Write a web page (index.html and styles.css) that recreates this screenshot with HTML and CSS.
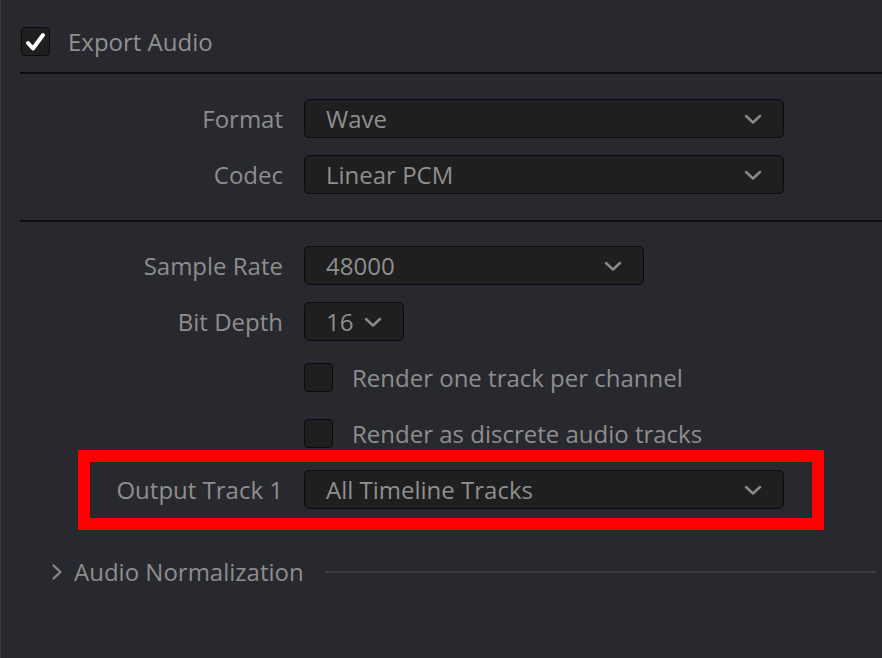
FILE: index.html
```html
<!DOCTYPE html>
<html>
<head>
<meta charset="utf-8">
<link rel="stylesheet" href="styles.css">
</head>
<body>
<div class="panel">
  <div class="header">
    <span class="check checked">
      <svg width="21" height="20" viewBox="0 0 21 20"><path d="M3 11 L8 16.5 L18 3" fill="none" stroke="#fff" stroke-width="4" stroke-linecap="round" stroke-linejoin="round"/></svg>
    </span>
    <span class="header-label">Export Audio</span>
  </div>
  <div class="sep"></div>
  <div class="group group-a">
    <div class="row">
      <span class="label">Format</span>
      <div class="select wide"><span>Wave</span><svg class="chev" width="18" height="10" viewBox="0 0 18 10"><path d="M2 2 L9 8.5 L16 2" fill="none" stroke="#8a8a8a" stroke-width="2.4" stroke-linecap="round" stroke-linejoin="round"/></svg></div>
    </div>
    <div class="row">
      <span class="label">Codec</span>
      <div class="select wide"><span>Linear PCM</span><svg class="chev" width="18" height="10" viewBox="0 0 18 10"><path d="M2 2 L9 8.5 L16 2" fill="none" stroke="#8a8a8a" stroke-width="2.4" stroke-linecap="round" stroke-linejoin="round"/></svg></div>
    </div>
  </div>
  <div class="sep"></div>
  <div class="group group-b">
    <div class="row">
      <span class="label">Sample Rate</span>
      <div class="select medium"><span>48000</span><svg class="chev" width="18" height="10" viewBox="0 0 18 10"><path d="M2 2 L9 8.5 L16 2" fill="none" stroke="#8a8a8a" stroke-width="2.4" stroke-linecap="round" stroke-linejoin="round"/></svg></div>
    </div>
    <div class="row">
      <span class="label">Bit Depth</span>
      <div class="select compact"><span>16</span><svg class="chev" width="18" height="10" viewBox="0 0 18 10"><path d="M2 2 L9 8.5 L16 2" fill="none" stroke="#8a8a8a" stroke-width="2.4" stroke-linecap="round" stroke-linejoin="round"/></svg></div>
    </div>
    <div class="row">
      <span class="label"></span>
      <div class="option"><span class="check"></span><span>Render one track per channel</span></div>
    </div>
    <div class="row">
      <span class="label"></span>
      <div class="option"><span class="check"></span><span>Render as discrete audio tracks</span></div>
    </div>
    <div class="row highlighted">
      <span class="label">Output Track 1</span>
      <div class="select wide"><span>All Timeline Tracks</span><svg class="chev" width="18" height="10" viewBox="0 0 18 10"><path d="M2 2 L9 8.5 L16 2" fill="none" stroke="#8a8a8a" stroke-width="2.4" stroke-linecap="round" stroke-linejoin="round"/></svg></div>
      <span class="highlight"></span>
    </div>
  </div>
  <div class="collapse">
    <svg class="arrow" width="12" height="18" viewBox="0 0 12 18"><path d="M2.5 2.5 L9.5 9 L2.5 15.5" fill="none" stroke="#8a8a8a" stroke-width="2.2" stroke-linecap="round" stroke-linejoin="round"/></svg>
    <span class="collapse-label">Audio Normalization</span>
    <span class="collapse-line"></span>
  </div>
</div>
</body>
</html>
```

FILE: styles.css
```css
html, body {
  margin: 0;
  padding: 0;
}
body {
  background: #28292e;
  width: 882px;
  height: 658px;
  overflow: hidden;
  font-family: "Open Sans", "Noto Sans", sans-serif;
  font-size: 24px;
  color: #8e8e8e;
  border-left: 1px solid #36363c;
  box-sizing: border-box;
}
.panel {
  padding-left: 19px;
  display: flex;
  flex-direction: column;
}
.header {
  margin-top: 22px;
  height: 39px;
  display: flex;
  align-items: center;
  gap: 18px;
}
.check {
  width: 29px;
  height: 29px;
  box-sizing: border-box;
  background: #1e1e1f;
  border: 1.5px solid #0c0c0c;
  border-radius: 4px;
  display: flex;
  align-items: center;
  justify-content: center;
  flex: none;
}
.header .check {
  margin-left: 1px;
}
.header-label {
  color: #909090;
}
.sep {
  height: 2px;
  background: #0e0e10;
  margin-top: 11px;
}
.group {
  display: flex;
  flex-direction: column;
  gap: 17px;
}
.group-a {
  padding-top: 25px;
  padding-bottom: 26px;
}
.group-a + .sep {
  margin-top: 0;
}
.group-b {
  padding-top: 24px;
}
.row {
  height: 39px;
  display: flex;
  align-items: center;
  gap: 21px;
  position: relative;
}
.label {
  width: 263px;
  text-align: right;
  flex: none;
}
.select {
  height: 39px;
  box-sizing: border-box;
  background: #1f1f20;
  border: 1.5px solid #0b0b0b;
  border-radius: 5px;
  display: flex;
  align-items: center;
  justify-content: space-between;
  padding: 0 21px 0 21px;
  color: #8f8f8f;
}
.select.wide { width: 480px; }
.select.medium { width: 340px; }
.select.compact { width: 100px; justify-content: flex-start; gap: 11px; }
.chev { display: block; flex: none; }
.option {
  display: flex;
  align-items: center;
  gap: 19px;
}
.highlight {
  position: absolute;
  left: 58px;
  top: -20px;
  width: 746px;
  height: 80px;
  box-sizing: border-box;
  border: 12px solid #ff0000;
  pointer-events: none;
}
.collapse {
  margin-top: 43px;
  height: 39px;
  display: flex;
  align-items: center;
  padding-left: 31px;
}
.arrow { display: block; flex: none; }
.collapse-label {
  margin-left: 11px;
}
.collapse-line {
  flex: 1;
  height: 2px;
  background: #3c3d42;
  margin-left: 21px;
  margin-right: 6px;
}
```
